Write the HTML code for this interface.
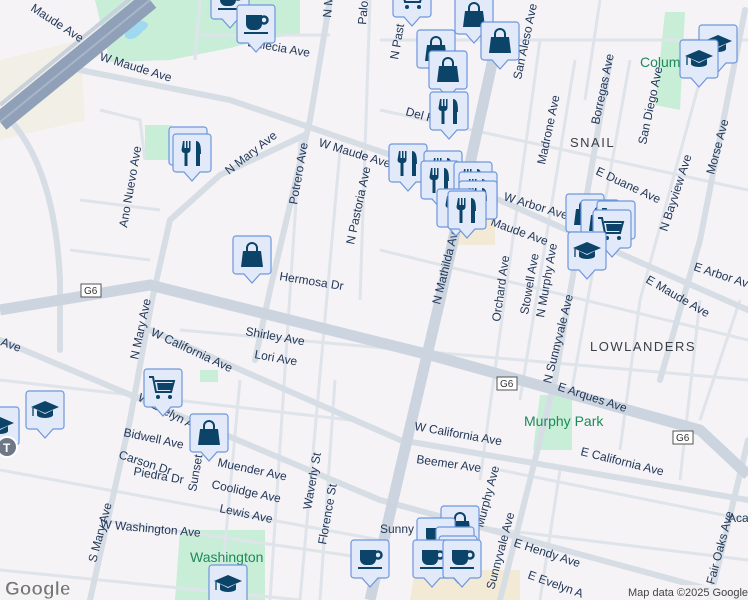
<!DOCTYPE html>
<html><head><meta charset="utf-8"><style>
html,body{margin:0;padding:0;width:748px;height:600px;overflow:hidden;background:#f5f3f5}
svg{display:block}
text{font-family:"Liberation Sans",sans-serif;font-size:12px;fill:#22385a}
.g{fill:#1e8a5a;font-size:14px}
.n{font-size:13px;letter-spacing:1.5px;fill:#3a3f47}
</style></head><body>
<svg width="748" height="600" viewBox="0 0 748 600" xmlns="http://www.w3.org/2000/svg">
<defs>
<g id="box"><path d="M-19 2 a3 3 0 0 1 3 -3 h32 a3 3 0 0 1 3 3 v32 a3 3 0 0 1 -3 3 h-8 l-8 9 l-8 -9 h-8 a3 3 0 0 1 -3 -3z" fill="#e2eafa" stroke="#6d96dc" stroke-width="1.2"/></g>
<g id="coffee"><use href="#box"/><g transform="translate(0,18)" fill="#0b4468"><path d="M-10 -9 h16 v9 a6 6 0 0 1 -6 6 h-4 a6 6 0 0 1 -6 -6z"/><circle cx="8" cy="-4" r="3.5" fill="none" stroke="#0b4468" stroke-width="2.5"/><rect x="-12" y="8" width="24" height="2"/></g></g>
<g id="bag"><use href="#box"/><g transform="translate(0,18)" fill="#0b4468"><path d="M-9 -4 h18 l2 16 h-22z"/><path d="M-5 -3 v-4 a5 5 0 0 1 10 0 v4" fill="none" stroke="#0b4468" stroke-width="2"/></g></g>
<g id="fork"><use href="#box"/><g transform="translate(0,18)" fill="#0b4468"><path d="M-9 -12 h1.5 v7 h1.5 v-7 h1.5 v7 h1.5 v-7 h1.5 v9 a3 3 0 0 1 -3 3 v13 h-3 v-13 a3 3 0 0 1 -3 -3z"/><path d="M4 -12 c5 0 5 8 5 13 h-1 v12 h-4z"/></g></g>
<g id="school"><use href="#box"/><g transform="translate(0,18)" fill="#0b4468"><path d="M-14 -3 L0 -9 L14 -3 L0 3z"/><path d="M-8 0 v5 a8 3 0 0 0 16 0 v-5 l-8 4z"/><path d="M-12 -2 v8" stroke="#0b4468" stroke-width="1.3"/></g></g>
<g id="cart"><use href="#box"/><g transform="translate(0,18)"><path d="M-14 -11 h4 l3 15 h15 l3 -11 h-19" fill="none" stroke="#0b4468" stroke-width="2"/><path d="M-6 -5 h16 l-2 7 h-13z" fill="#0b4468"/><circle cx="-5" cy="9" r="2" fill="#0b4468"/><circle cx="7" cy="9" r="2" fill="#0b4468"/></g></g>
</defs>

<path d="M0 60 L80 40 L85 120 L0 140z" fill="#f2efe6"/>
<path d="M95 0 H300 V35 L270 38 L230 48 L170 60 L110 62z" fill="#c9eed8"/>
<path d="M125 25 q8 -6 18 -4 q10 3 0 10 q-10 12 -18 6z" fill="#9fd9f0"/>
<path d="M665 12 L685 12 L680 110 L655 105z" fill="#c9eed8"/>
<path d="M145 125 H172 V160 H145z" fill="#c9eed8"/>
<path d="M540 395 H572 V450 H533z" fill="#c9eed8"/>
<path d="M180 530 H265 V600 H175z" fill="#c9eed8"/>
<path d="M415 570 H520 V600 H410z" fill="#f3ead6"/>
<path d="M460 215 H495 V245 H455z" fill="#f3ead6"/>
<rect x="200" y="370" width="18" height="12" fill="#c9eed8"/>

<g stroke="#dfe3ea" stroke-width="3" fill="none">
<path d="M380 40 H748"/><path d="M200 35 H330"/><path d="M380 110 L748 190"/><path d="M380 250 L748 340"/>
<path d="M180 330 L748 380"/><path d="M0 380 L350 420"/><path d="M0 470 L380 540"/><path d="M100 520 L380 560"/>
<path d="M500 470 L748 520"/><path d="M420 520 L748 560"/><path d="M0 570 L300 600"/>
<path d="M575 60 L520 400"/><path d="M630 60 L570 400"/><path d="M700 80 L640 300"/><path d="M600 0 L585 100"/>
<path d="M540 40 L480 480"/><path d="M300 140 L270 600"/><path d="M340 150 L300 600"/><path d="M370 0 L360 300"/>
<path d="M200 0 L195 60"/><path d="M560 470 L540 600"/><path d="M240 380 L220 600"/><path d="M335 380 L320 600"/>
<path d="M640 300 L620 450"/><path d="M700 300 L680 480"/><path d="M700 420 L740 300"/>
<path d="M100 110 L140 120 L145 160"/><path d="M80 200 L160 210"/><path d="M70 250 L150 260"/>
</g>
<g stroke="#d6dde5" stroke-width="6" fill="none" stroke-linecap="round">
<path d="M80 70 L230 100 L420 165 L748 310"/>
<path d="M330 0 L310 120 L270 290 L255 360"/>
<path d="M305 135 L220 175 L170 220 L152 300 L130 420 L90 600"/>
<path d="M150 330 L400 440 L748 500"/>
<path d="M0 340 L380 500 L748 600"/>
<path d="M745 10 L700 240 L660 380"/><path d="M748 440 L710 600"/>
<path d="M610 60 L555 380 L500 600"/>
<path d="M10 120 Q55 170 60 280 L60 350"/>
</g>
<g stroke="#ccd5df" stroke-width="11" fill="none">
<path d="M0 310 L150 285 L430 355 L700 430 L748 475"/>
<path d="M495 50 L440 300 L400 470 L370 600"/>
</g>
<path d="M0 122 L150 0" stroke="#8fa0b8" stroke-width="20" fill="none"/>
<path d="M0 122 L150 0" stroke="#a9b6c8" stroke-width="2" fill="none"/>
<path d="M0 105 L135 -5" stroke="#c8d1dc" stroke-width="4" fill="none"/>

<text transform="translate(30,10) rotate(33)">Maude Ave</text>
<text transform="translate(99,60) rotate(17)">W Maude Ave</text>
<text transform="translate(318,146) rotate(17)">W Maude Ave</text>
<text transform="translate(247,46) rotate(10)">Dulecia Ave</text>
<text transform="translate(229,175) rotate(-38)">N Mary Ave</text>
<text transform="translate(127,228) rotate(-80)">Ano Nuevo Ave</text>
<text transform="translate(297,205) rotate(-80)">Potrero Ave</text>
<text transform="translate(354,245) rotate(-78)">N Pastoria Ave</text>
<text transform="translate(279,280) rotate(9)">Hermosa Dr</text>
<text transform="translate(331,18) rotate(-85)">N Ma</text>
<text transform="translate(366,25) rotate(-85)">Palom</text>
<text transform="translate(398,60) rotate(-80)">N Past</text>
<text transform="translate(405,115) rotate(15)">Del Re</text>
<text transform="translate(521,80) rotate(-78)">San Aleso Ave</text>
<text transform="translate(545,165) rotate(-78)">Madrone Ave</text>
<text transform="translate(599,125) rotate(-78)">Borregas Ave</text>
<text transform="translate(646,145) rotate(-78)">San Diego Ave</text>
<text transform="translate(714,175) rotate(-75)">Morse Ave</text>
<text transform="translate(595,174) rotate(25)">E Duane Ave</text>
<text transform="translate(503,200) rotate(17)">W Arbor Ave</text>
<text transform="translate(490,225) rotate(20)">Maude Ave</text>
<text transform="translate(693,270) rotate(18)">E Arbor Ave</text>
<text transform="translate(645,282) rotate(30)">E Maude Ave</text>
<text transform="translate(667,232) rotate(-72)">N Bayview Ave</text>
<text transform="translate(440,305) rotate(-76)">N Mathilda Ave</text>
<text transform="translate(500,322) rotate(-82)">Orchard Ave</text>
<text transform="translate(528,315) rotate(-80)">Stowell Ave</text>
<text transform="translate(544,318) rotate(-80)">N Murphy Ave</text>
<text transform="translate(551,384) rotate(-76)">N Sunnyvale Ave</text>
<text class="n" x="590" y="351">LOWLANDERS</text>
<text class="n" x="570" y="147">SNAIL</text>
<text class="g" x="640" y="67">Colum</text>
<text transform="translate(557,390) rotate(18)">E Arques Ave</text>
<text class="g" x="524" y="426">Murphy Park</text>
<text transform="translate(414,430) rotate(10)">W California Ave</text>
<text transform="translate(580,455) rotate(14)">E California Ave</text>
<text transform="translate(416,463) rotate(8)">Beemer Ave</text>
<text transform="translate(483,528) rotate(-75)">Murphy Ave</text>
<text transform="translate(494,590) rotate(-75)">Sunnyvale Ave</text>
<text transform="translate(513,546) rotate(18)">E Hendy Ave</text>
<text transform="translate(527,578) rotate(20)">E Evelyn A</text>
<text transform="translate(714,585) rotate(-75)">Fair Oaks Ave</text>
<text x="728" y="522">Aca</text>
<text x="380" y="533">Sunny</text>
<text transform="translate(245,335) rotate(10)">Shirley Ave</text>
<text transform="translate(254,358) rotate(10)">Lori Ave</text>
<text transform="translate(150,335) rotate(25)">W California Ave</text>
<text transform="translate(138,360) rotate(-78)">N Mary Ave</text>
<text transform="translate(0,345) rotate(20)">Ave</text>
<text transform="translate(137,400) rotate(28)">W Evelyn Ave</text>
<text transform="translate(123,436) rotate(12)">Bidwell Ave</text>
<text transform="translate(118,458) rotate(18)">Carson Dr</text>
<text transform="translate(133,475) rotate(10)">Piedra Dr</text>
<text transform="translate(196,492) rotate(-80)">Sunset</text>
<text transform="translate(217,466) rotate(12)">Muender Ave</text>
<text transform="translate(211,488) rotate(12)">Coolidge Ave</text>
<text transform="translate(219,512) rotate(12)">Lewis Ave</text>
<text transform="translate(100,528) rotate(5)">W Washington Ave</text>
<text transform="translate(96,563) rotate(-75)">S Mary Ave</text>
<text transform="translate(311,510) rotate(-80)">Waverly St</text>
<text transform="translate(326,545) rotate(-80)">Florence St</text>
<text class="g" x="190" y="562">Washington</text>
<g><rect x="81" y="284" width="20" height="13" fill="#fff" stroke="#555"/><text x="84" y="294" style="font-size:10px;fill:#333">G6</text>
<rect x="497" y="377" width="20" height="13" fill="#fff" stroke="#555"/><text x="500" y="387" style="font-size:10px;fill:#333">G6</text>
<rect x="673" y="431" width="20" height="13" fill="#fff" stroke="#555"/><text x="676" y="441" style="font-size:10px;fill:#333">G6</text></g>

<use href="#coffee" x="230" y="-18"/><use href="#coffee" x="256" y="6"/>
<use href="#fork" x="188" y="128"/><use href="#fork" x="192" y="135"/>
<use href="#bag" x="252" y="237"/>
<use href="#cart" x="412" y="-20"/>
<use href="#bag" x="474" y="-3"/><use href="#bag" x="500" y="23"/>
<use href="#bag" x="436" y="31"/><use href="#bag" x="448" y="52"/>
<use href="#fork" x="449" y="93"/>
<use href="#fork" x="408" y="145"/><use href="#fork" x="443" y="152"/>
<use href="#fork" x="440" y="162"/><use href="#fork" x="473" y="163"/>
<use href="#fork" x="478" y="173"/><use href="#fork" x="478" y="182"/>
<use href="#fork" x="456" y="190"/><use href="#fork" x="467" y="192"/>
<use href="#school" x="718" y="26"/><use href="#school" x="699" y="41"/>
<use href="#bag" x="585" y="195"/><use href="#bag" x="600" y="201"/>
<use href="#cart" x="616" y="202"/><use href="#cart" x="612" y="211"/>
<use href="#school" x="587" y="233"/>
<use href="#cart" x="163" y="370"/>
<use href="#school" x="45" y="392"/><use href="#school" x="0" y="408"/>
<use href="#bag" x="209" y="415"/>
<circle cx="7" cy="447" r="10" fill="#6e7886" stroke="#fff" stroke-width="2"/><text x="3" y="452" style="fill:#fff;font-size:12px;font-weight:bold">T</text>
<use href="#bag" x="460" y="507"/><use href="#coffee" x="436" y="519"/>
<use href="#coffee" x="455" y="528"/><use href="#coffee" x="458" y="537"/>
<use href="#coffee" x="370" y="541"/><use href="#coffee" x="432" y="541"/><use href="#coffee" x="462" y="541"/>
<use href="#school" x="228" y="566"/>

<text x="5" y="595" style="font-size:19px;fill:#777;font-weight:bold;stroke:#fff;stroke-width:0.5">Google</text>
<rect x="624" y="585" width="124" height="15" fill="#f5f3f5" opacity="0.8"/>
<text x="628" y="596" style="font-size:11px;fill:#444">Map data ©2025 Google</text>
</svg>
</body></html>
